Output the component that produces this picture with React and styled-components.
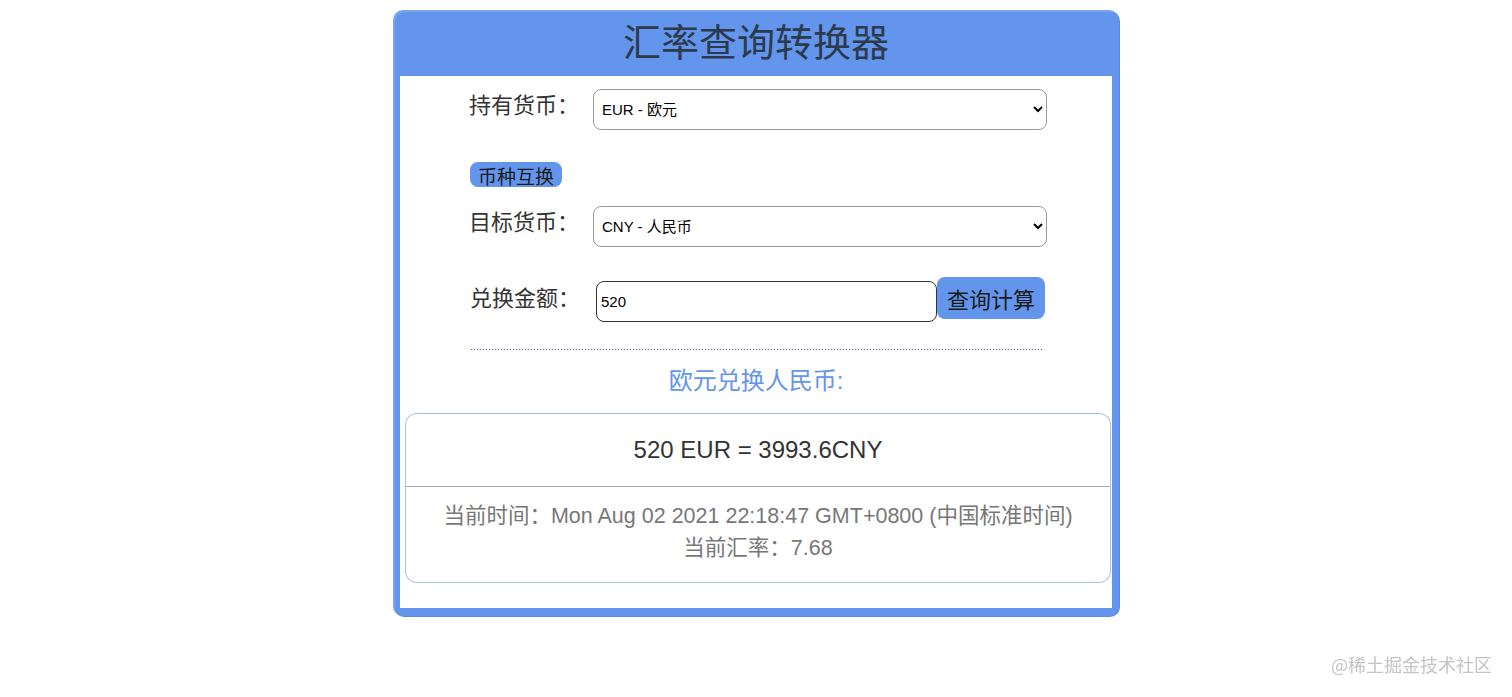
import React from 'react';
import styled, { createGlobalStyle } from 'styled-components';

const GlobalStyle = createGlobalStyle`
	body {
		margin: 0;
		background: #ffffff;
		font-family: 'Liberation Sans', 'Noto Sans CJK SC', sans-serif;
	}
`;

const Page = styled.div`
	display: flex;
	justify-content: center;
	padding-top: 10px;
	height: 687px;
`;

const Converter = styled.div`
	width: 726px;
	height: 606px;
	box-sizing: border-box;
	background-color: #6495ed;
	border-radius: 10px;
	padding: 0 7px 8px 7px;
	display: flex;
	flex-direction: column;
	box-shadow: inset 2px 2px 0 rgba(255, 255, 255, 0.15), 1px 1px 0 #5b8be6;
`;

const Title = styled.h1`
	margin: 0;
	height: 66px;
	line-height: 66px;
	text-align: center;
	font-size: 38px;
	font-weight: normal;
	color: #2c3a4c;
`;

const Body = styled.div`
	flex: 1;
	background: #ffffff;
	display: flex;
	flex-direction: column;
	align-items: center;
	padding-top: 13px;
`;

const Form = styled.div`
	width: 578px;
	display: flex;
	flex-direction: column;
	margin-left: 4px;
`;

const Row = styled.div`
	display: flex;
	align-items: ${props => props.align || 'center'};
	margin-top: ${props => props.top || 0}px;
`;

const Label = styled.label`
	width: ${props => props.width || 124}px;
	padding-left: ${props => props.indent || 0}px;
	margin-top: ${props => props.mt || 0}px;
	margin-bottom: ${props => (props.mt ? 0 : 8)}px;
	box-sizing: border-box;
	font-size: 22px;
	line-height: 22px;
	color: #333;
`;

const Select = styled.select`
	width: 454px;
	height: 41px;
	border: 1px solid #999;
	border-radius: 8px;
	background: #fff;
	font-family: 'Liberation Sans', 'Noto Sans CJK SC', sans-serif;
	font-size: 15px;
	color: #000;
	padding: 0 4px;
`;

const Input = styled.input`
	width: 341px;
	height: 41px;
	box-sizing: border-box;
	border: 1px solid #333;
	border-radius: 8px;
	font-family: 'Liberation Sans', sans-serif;
	font-size: 15px;
	padding: 0 4px;
	margin-top: 4px;
`;

const Button = styled.button`
	background: #6495ed;
	border: none;
	border-radius: 8px;
	color: #1a1a1a;
	font-family: 'Liberation Sans', 'Noto Sans CJK SC', sans-serif;
	font-size: ${props => props.size || 22}px;
	height: ${props => props.h || 42}px;
	padding: 0 ${props => props.px || 10}px;
	cursor: pointer;
`;

const SwapRow = styled.div`
	display: flex;
	margin-top: 32px;
	margin-left: 1px;
`;

const Divider = styled.div`
	width: 573px;
	height: 1px;
	background-image: linear-gradient(to right, #4f4fe6 50%, rgba(255, 255, 255, 0) 50%);
	background-size: 3px 1px;
	margin-top: 27px;
	margin-left: 3px;
`;

const Subtitle = styled.div`
	margin-top: 16px;
	font-size: 24px;
	line-height: 30px;
	color: #6495ed;
`;

const Card = styled.div`
	width: 706px;
	margin-top: 17px;
	margin-left: 4px;
	box-sizing: border-box;
	border: 1px solid #a9c3ea;
	border-top-color: #9fc0ea;
	border-radius: 12px;
	display: flex;
	flex-direction: column;
`;

const Result = styled.div`
	height: 72px;
	display: flex;
	align-items: center;
	justify-content: center;
	font-size: 24px;
	color: #333;
	border-bottom: 1px solid #aaa;
`;

const Info = styled.div`
	padding: 13px 0 18px;
	text-align: center;
	font-size: 21.5px;
	line-height: 32px;
	color: #777;
`;

const Watermark = styled.div`
	position: fixed;
	right: 20px;
	bottom: 20px;
	font-size: 18px;
	color: #c4c4c4;
	font-family: 'Noto Sans CJK SC', sans-serif;
`;

export default function App() {
	return (
		<>
			<GlobalStyle />
			<Page>
				<Converter>
					<Title>汇率查询转换器</Title>
					<Body>
						<Form>
							<Row>
								<Label indent={-2}>持有货币：</Label>
								<Select defaultValue="EUR">
									<option value="EUR">EUR - 欧元</option>
									<option value="CNY">CNY - 人民币</option>
									<option value="USD">USD - 美元</option>
								</Select>
							</Row>
							<SwapRow>
								<Button size={19} h={25} px={8}>币种互换</Button>
							</SwapRow>
							<Row top={19}>
								<Label>目标货币：</Label>
								<Select defaultValue="CNY">
									<option value="EUR">EUR - 欧元</option>
									<option value="CNY">CNY - 人民币</option>
									<option value="USD">USD - 美元</option>
								</Select>
							</Row>
							<Row top={30} align="flex-start">
								<Label width={127} indent={1} mt={11}>兑换金额：</Label>
								<Input defaultValue="520" />
								<Button>查询计算</Button>
							</Row>
						</Form>
						<Divider />
						<Subtitle>欧元兑换人民币:</Subtitle>
						<Card>
							<Result>520 EUR = 3993.6CNY</Result>
							<Info>
								当前时间：Mon Aug 02 2021 22:18:47 GMT+0800 (中国标准时间)
								<br />
								当前汇率：7.68
							</Info>
						</Card>
					</Body>
				</Converter>
			</Page>
			<Watermark>@稀土掘金技术社区</Watermark>
		</>
	);
}
